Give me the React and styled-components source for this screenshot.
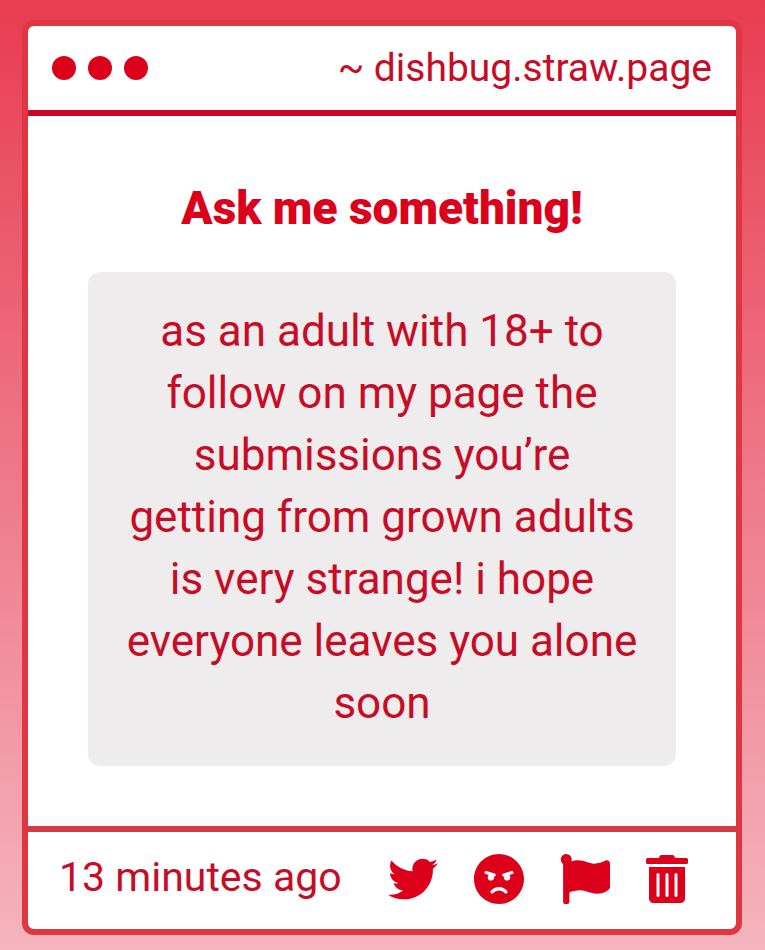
import styled, { createGlobalStyle } from "styled-components";
import { FaTwitter, FaAngry, FaFlag, FaTrashAlt } from "react-icons/fa";

const actions = [
  { label: "Share on Twitter", icon: FaTwitter, width: 50, height: 50 },
  { label: "Block sender", icon: FaAngry, width: 50, height: 52 },
  { label: "Report", icon: FaFlag, width: 50, height: 50 },
  { label: "Delete", icon: FaTrashAlt, width: 42, height: 48 },
];

function App() {
  return (
    <>
      <GlobalStyle />
      <Page>
        <Card>
          <Header>
            <Dots>
              <Dot />
              <Dot />
              <Dot />
            </Dots>
            <SiteLink href="#">~ dishbug.straw.page</SiteLink>
          </Header>
          <Body>
            <Title>Ask me something!</Title>
            <Message>
              as an adult with 18+ to follow on my page the submissions you’re
              getting from grown adults is very strange! i hope everyone leaves
              you alone soon
            </Message>
          </Body>
          <Footer>
            <Time>13 minutes ago</Time>
            <Actions>
              {actions.map(({ label, icon: Icon, width, height }) => (
                <IconButton
                  key={label}
                  type="button"
                  aria-label={label}
                  $width={width}
                  $height={height}
                >
                  <Icon />
                </IconButton>
              ))}
            </Actions>
          </Footer>
        </Card>
      </Page>
    </>
  );
}

const GlobalStyle = createGlobalStyle`
  :root {
    --clr-primary: #dc001b;
    --clr-text: #c60c26;
    --clr-border: #df3641;
    --clr-box: #eeecec;
  }

  * {
    box-sizing: border-box;
    margin: 0;
    padding: 0;
  }

  body {
    font-family: Roboto, "Liberation Sans", sans-serif;
    color: var(--clr-text);
  }
`;

const Page = styled.main`
  display: flex;
  min-height: 100vh;
  padding: 20px 23px 15px 22px;
  background: linear-gradient(#e83c52, #f5b5be);
`;

const Card = styled.article`
  display: flex;
  flex-direction: column;
  flex: 1;
  min-width: 0;
  border: 6px solid var(--clr-border);
  border-radius: 12px;
  background: #fff;
`;

const Header = styled.header`
  display: flex;
  align-items: center;
  justify-content: space-between;
  padding: 18px 24px;
  border-bottom: 6px solid #c80a26;
`;

const Dots = styled.div`
  display: flex;
  gap: 12px;
`;

const Dot = styled.span`
  width: 24px;
  height: 24px;
  border-radius: 50%;
  background: var(--clr-primary);
`;

const SiteLink = styled.a`
  font-size: 39px;
  line-height: 48px;
  color: inherit;
  text-decoration: none;
`;

const Body = styled.section`
  flex: 1;
  padding: 60px;
`;

const Title = styled.h1`
  margin-bottom: 32px;
  font-size: 46px;
  line-height: 64px;
  font-weight: 900;
  text-align: center;
  color: var(--clr-primary);
`;

const Message = styled.p`
  padding: 28px 35px 32px;
  border-radius: 12px;
  background: var(--clr-box);
  font-size: 44px;
  line-height: 62px;
  text-align: center;
`;

const Footer = styled.footer`
  display: flex;
  align-items: flex-start;
  justify-content: space-between;
  padding: 21px 48px 24px 31px;
  border-top: 6px solid #d23a45;
`;

const Time = styled.time`
  font-size: 41px;
  line-height: 48px;
`;

const Actions = styled.div`
  display: flex;
  align-items: center;
  gap: 36px;
`;

const IconButton = styled.button`
  display: flex;
  border: 0;
  background: none;
  color: var(--clr-primary);
  cursor: pointer;

  svg {
    width: ${({ $width }) => $width}px;
    height: ${({ $height }) => $height}px;
  }
`;

export default App;
